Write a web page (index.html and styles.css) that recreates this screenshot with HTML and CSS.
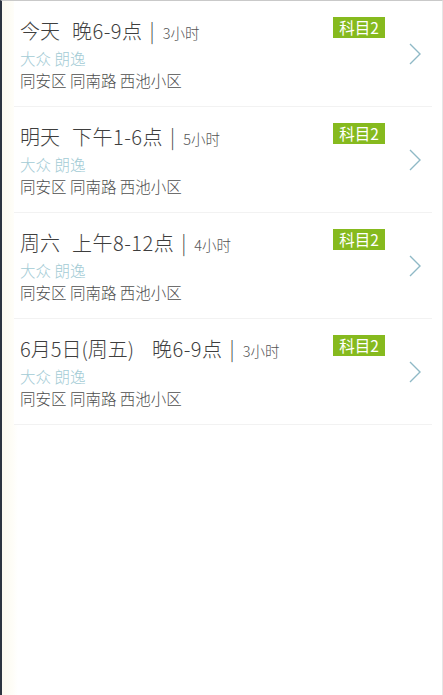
FILE: index.html
```html
<!DOCTYPE html>
<html lang="zh-CN">
<head>
<meta charset="utf-8">
<title>预约列表</title>
<link rel="stylesheet" href="styles.css">
</head>
<body>
<div class="frame">
  <ul class="list">
    <li class="row">
      <div class="info">
        <div class="title"><span class="day">今天</span><span class="time">晚6-9点</span><span class="bar">|</span><span class="dur">3小时</span></div>
        <div class="car">大众 朗逸</div>
        <div class="addr">同安区 同南路 西池小区</div>
      </div>
      <span class="badge">科目2</span>
      <svg class="chev" width="12" height="22" viewBox="0 0 12 22"><path d="M1 1 L11 11 L1 21" fill="none" stroke="#8fb9c6" stroke-width="1.4"/></svg>
    </li>
    <li class="row">
      <div class="info">
        <div class="title"><span class="day">明天</span><span class="time">下午1-6点</span><span class="bar">|</span><span class="dur">5小时</span></div>
        <div class="car">大众 朗逸</div>
        <div class="addr">同安区 同南路 西池小区</div>
      </div>
      <span class="badge">科目2</span>
      <svg class="chev" width="12" height="22" viewBox="0 0 12 22"><path d="M1 1 L11 11 L1 21" fill="none" stroke="#8fb9c6" stroke-width="1.4"/></svg>
    </li>
    <li class="row">
      <div class="info">
        <div class="title"><span class="day">周六</span><span class="time">上午8-12点</span><span class="bar">|</span><span class="dur">4小时</span></div>
        <div class="car">大众 朗逸</div>
        <div class="addr">同安区 同南路 西池小区</div>
      </div>
      <span class="badge">科目2</span>
      <svg class="chev" width="12" height="22" viewBox="0 0 12 22"><path d="M1 1 L11 11 L1 21" fill="none" stroke="#8fb9c6" stroke-width="1.4"/></svg>
    </li>
    <li class="row">
      <div class="info">
        <div class="title"><span class="day">6月5日(周五)</span><span class="time wide">晚6-9点</span><span class="bar">|</span><span class="dur">3小时</span></div>
        <div class="car">大众 朗逸</div>
        <div class="addr">同安区 同南路 西池小区</div>
      </div>
      <span class="badge">科目2</span>
      <svg class="chev" width="12" height="22" viewBox="0 0 12 22"><path d="M1 1 L11 11 L1 21" fill="none" stroke="#8fb9c6" stroke-width="1.4"/></svg>
    </li>
  </ul>
</div>
</body>
</html>
```

FILE: styles.css
```css
* { box-sizing: border-box; }
html, body { margin: 0; padding: 0; }
body {
  width: 443px;
  height: 695px;
  overflow: hidden;
  background: #fff;
  font-family: "Noto Sans CJK SC", "Liberation Sans", sans-serif;
  font-weight: 300;
}
.frame {
  width: 443px;
  height: 695px;
  border-left: 2px solid #2c3440;
  border-top: 1px solid #c9c9c9;
  border-right: 1px solid #e6e6e6;
  background: linear-gradient(90deg, #fcfaf0 0, #fefdf7 10px, #ffffff 16px);
}
.list {
  list-style: none;
  margin: 0 10px 0 12px;
  padding: 0;
  background: #fff;
}
.row {
  display: flex;
  align-items: flex-start;
  height: 106px;
  padding: 16px 11px 0 6px;
  border-bottom: 1px solid #f2f2f2;
}
.info {
  flex: 1;
  min-width: 0;
  margin-top: 2px;
}
.title {
  display: flex;
  align-items: baseline;
  height: 24px;
  line-height: 24px;
  font-size: 20px;
  color: #3e3e3e;
  white-space: nowrap;
}
.time { margin-left: 12px; letter-spacing: 0.5px; }
.time.wide { margin-left: 18px; }
.bar { margin: 0 8px 0 7px; color: #4a4a4a; }
.dur { font-size: 14.5px; color: #555; }
.car {
  margin-top: 5px;
  height: 20px;
  line-height: 20px;
  font-size: 15.5px;
  color: #a3cbd5;
}
.addr {
  margin-top: 2px;
  height: 20px;
  line-height: 20px;
  font-size: 15.5px;
  color: #4e4e4e;
}
.badge {
  flex: none;
  width: 52px;
  height: 21px;
  line-height: 21px;
  text-align: center;
  font-size: 15.5px;
  font-weight: 400;
  color: #fff;
  background: #86ba1e;
}
.chev {
  flex: none;
  margin-left: 24px;
  margin-top: 26px;
}
```
